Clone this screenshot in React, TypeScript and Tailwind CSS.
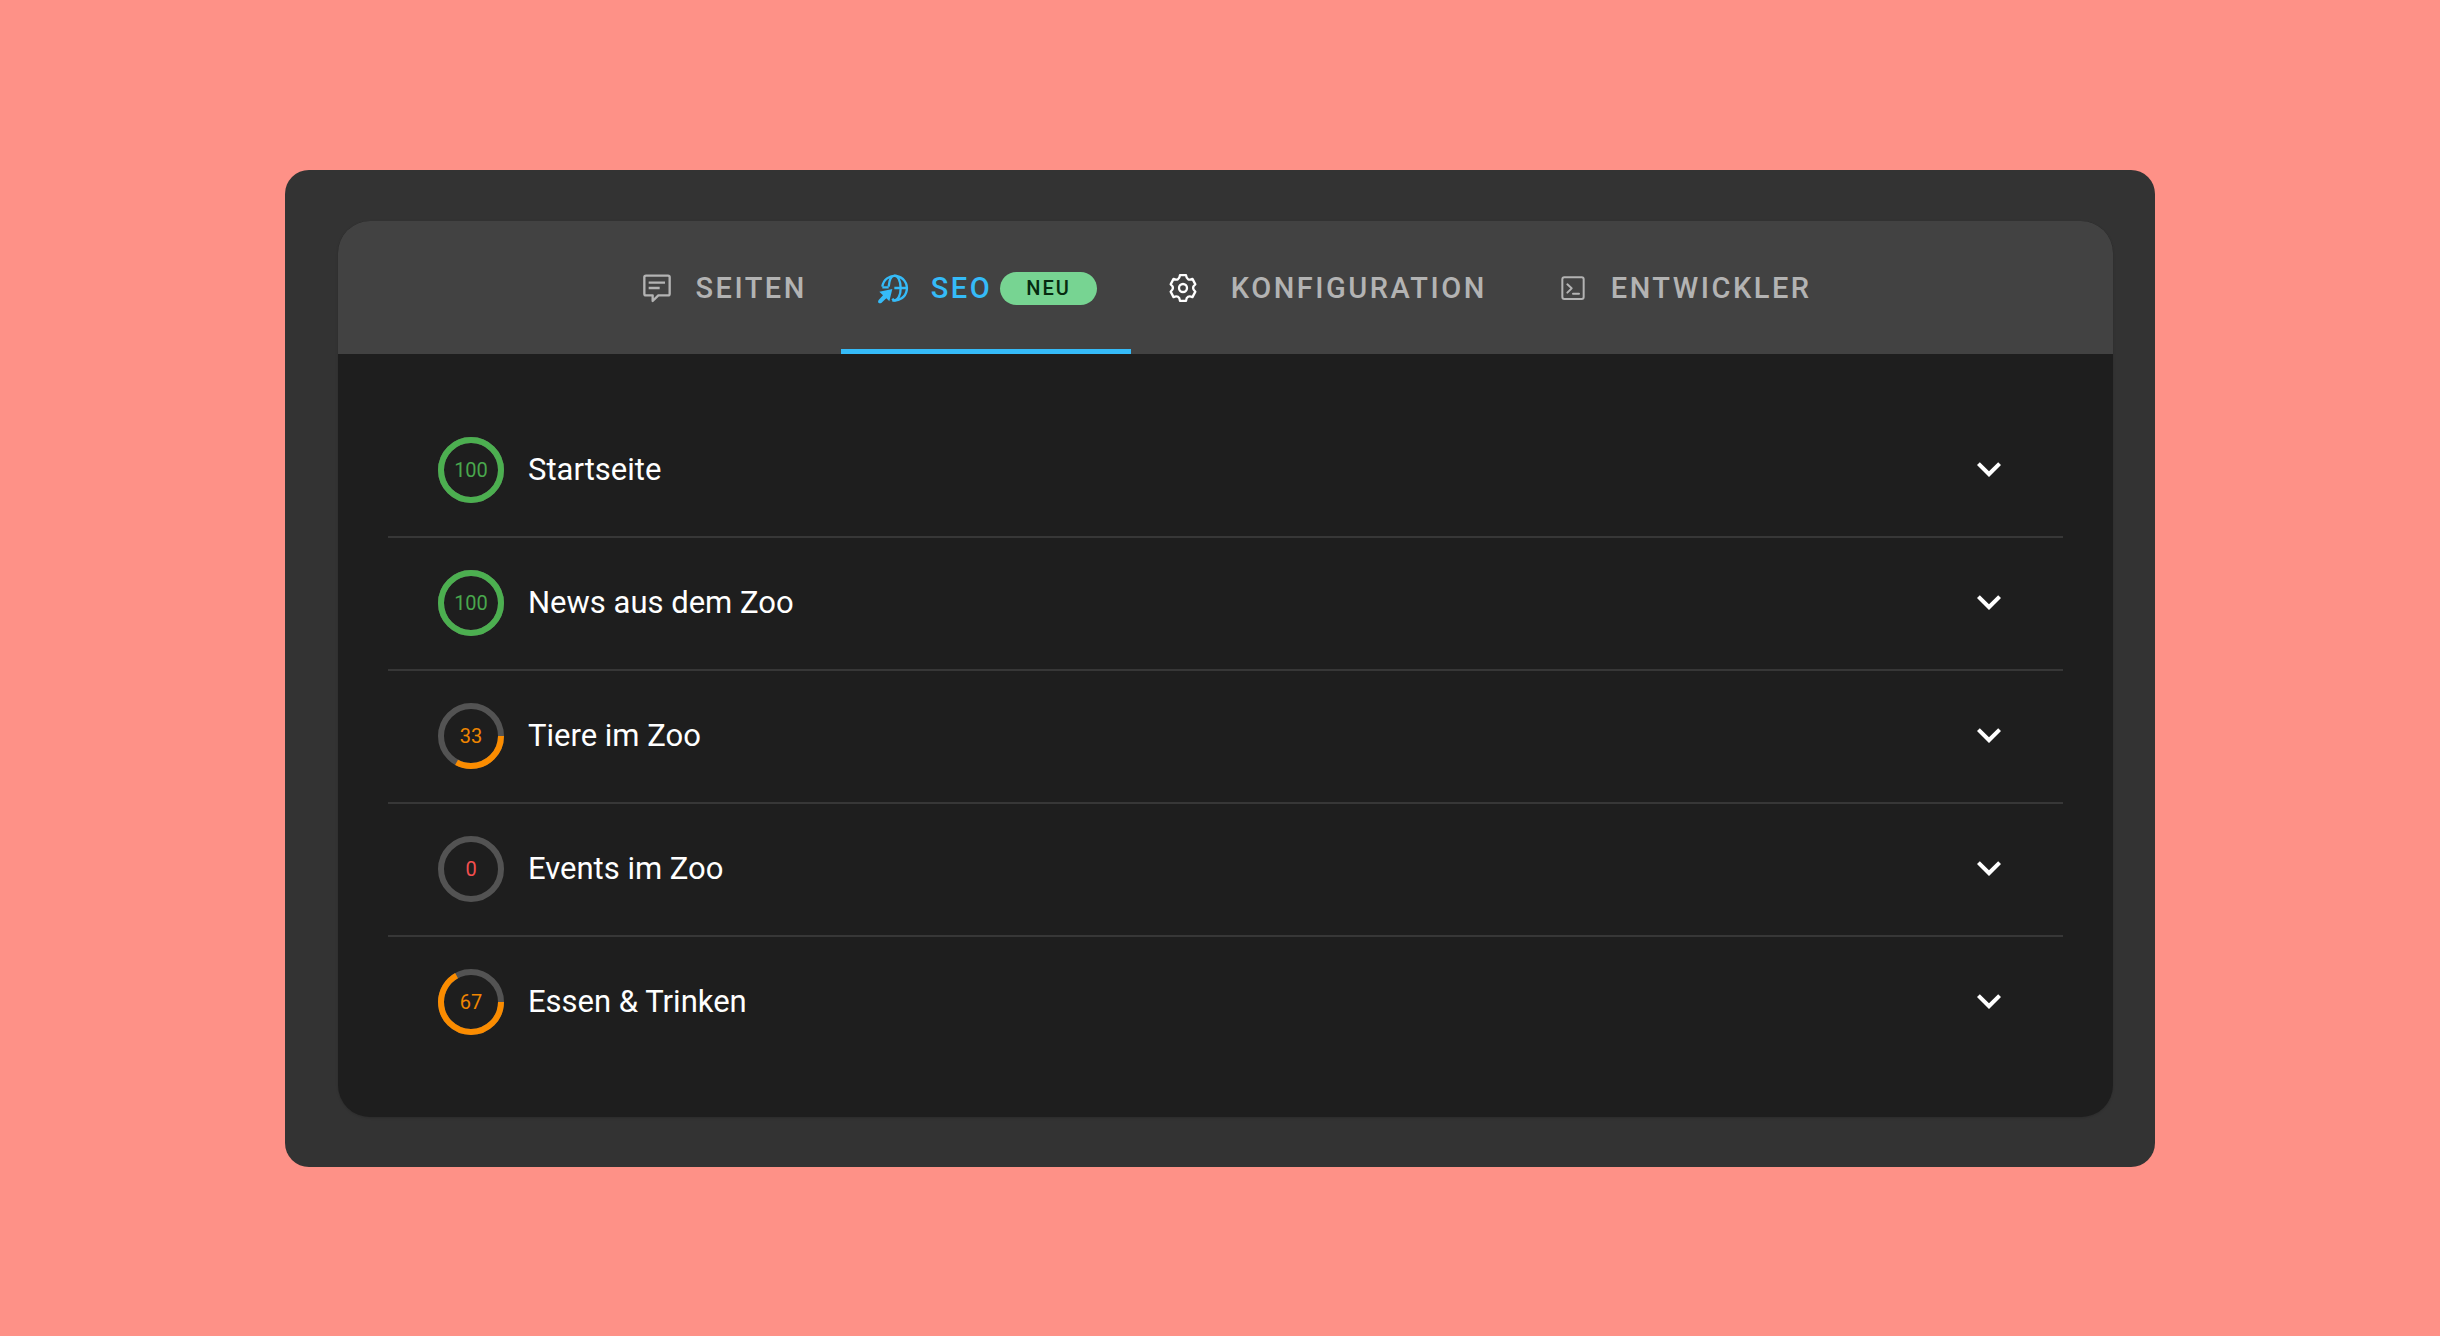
import { useState } from 'react'
import type { ReactNode } from 'react'

interface Page {
  title: string
  score: number
}

interface Tab {
  id: string
  label: string
  icon: ReactNode
  badge?: string
}

const pages: Page[] = [
  { title: 'Startseite', score: 100 },
  { title: 'News aus dem Zoo', score: 100 },
  { title: 'Tiere im Zoo', score: 33 },
  { title: 'Events im Zoo', score: 0 },
  { title: 'Essen & Trinken', score: 67 },
]

function PagesIcon() {
  return (
    <svg viewBox="63 89 108 108" className="size-9 shrink-0" fill="none" stroke="currentColor" strokeWidth="7" strokeLinejoin="round" aria-hidden="true">
      <path d="M84 106H150Q155 106 155 111V160Q155 165 150 165H121L104 182V165H84Q79 165 79 160V111Q79 106 84 106Z" />
      <path d="M92 127H141M92 143H125" />
    </svg>
  )
}

function SeoIcon() {
  return (
    <svg viewBox="769 89 108 108" className="size-9 shrink-0" fill="none" stroke="currentColor" strokeWidth="7" aria-hidden="true">
      <path d="M791 139A37 37 0 1 1 821 180" />
      <path d="M810 139C812 118 819 106 828 106C838 106 846 122 846 143S838 180 828 180C825 180 823 178 821 175" />
      <path d="M791 141H810M827 143H865" />
      <path d="M782 154L821 146L812 183L803 174L788 188Q783 190 779 187Q777 183 780 179L793 165Z" fill="currentColor" stroke="none" />
    </svg>
  )
}

function GearIcon() {
  return (
    <svg viewBox="-54 -54 108 108" className="mr-2.5 size-9 shrink-0 text-white" fill="none" stroke="currentColor" strokeWidth="7" strokeLinejoin="round" aria-hidden="true">
      <path d="M-9 -38.5H9C10.5 -26.2 17.5 -22.3 28.4 -27.4L37 -10.9C28 -4 28 4 37 10.9L28.4 27.4C17.5 22.3 10.5 26.2 9 38.5H-9C-10.5 26.2 -17.5 22.3 -28.4 27.4L-37 10.9C-28 4 -28 -4 -37 -10.9L-28.4 -27.4C-17.5 -22.3 -10.5 -26.2 -9 -38.5Z" />
      <circle r="12" />
    </svg>
  )
}

function DeveloperIcon() {
  return (
    <svg viewBox="20 28 108 108" className="size-9 shrink-0" fill="none" stroke="currentColor" strokeWidth="6" strokeLinecap="round" strokeLinejoin="round" aria-hidden="true">
      <rect x="42" y="50" width="64" height="65" rx="6" />
      <path d="M57 71L70 83L57 96M74 99H92" />
    </svg>
  )
}

const tabs: Tab[] = [
  { id: 'pages', label: 'SEITEN', icon: <PagesIcon /> },
  { id: 'seo', label: 'SEO', icon: <SeoIcon />, badge: 'NEU' },
  { id: 'config', label: 'KONFIGURATION', icon: <GearIcon /> },
  { id: 'dev', label: 'ENTWICKLER', icon: <DeveloperIcon /> },
]

const scoreColor = (score: number) => {
  if (score === 100) return 'text-[#4caf50]'
  if (score > 0) return 'text-[#fb8c00]'
  return 'text-[#ff5252]'
}

function ScoreRing({ score }: { score: number }) {
  return (
    <span className={`grid size-[66px] shrink-0 place-items-center ${scoreColor(score)}`}>
      <svg viewBox="0 0 66 66" className="col-start-1 row-start-1 size-full" fill="none" strokeWidth="6" aria-hidden="true">
        <circle cx="33" cy="33" r="30" className="stroke-[#535353]" />
        {/* progress starts at 3 o'clock */}
        {score > 0 && (
          <circle cx="33" cy="33" r="30" stroke="currentColor" pathLength="100" strokeDasharray={`${score} 100`} />
        )}
      </svg>
      <span className="col-start-1 row-start-1 text-[20px] leading-6 opacity-95">{score}</span>
    </span>
  )
}

export default function App() {
  const [activeTab, setActiveTab] = useState('seo')
  const [openPage, setOpenPage] = useState<string | null>(null)

  return (
    <main className="flex min-h-screen items-center justify-center bg-[#fe9187] font-['Roboto',sans-serif]">
      <div className="w-full max-w-[1870px] rounded-3xl bg-[#333333] pt-[51px] pr-[42px] pb-[50px] pl-[53px]">
        <div className="overflow-hidden rounded-[32px] bg-[#1e1e1e] shadow-sm">
          <div role="tablist" className="flex h-[133px] justify-center bg-[#424242]">
            {tabs.map(tab => (
              <button
                key={tab.id}
                type="button"
                role="tab"
                aria-selected={activeTab === tab.id}
                onClick={() => setActiveTab(tab.id)}
                className={`flex items-center border-b-[5px] px-[34px] pt-[7px] text-[29px] leading-9 font-medium tracking-[2.5px] ${
                  activeTab === tab.id ? 'border-[#35bbf8] text-[#35bbf8]' : 'border-transparent text-[#b3b3b3]'
                }`}
              >
                {tab.icon}
                <span className="ml-5">{tab.label}</span>
                {tab.badge && (
                  <span className="ml-2 flex h-[33px] items-center rounded-full bg-[#77d492] px-[26px] text-[20px] leading-6 tracking-[2px] text-[#062b10]">
                    {tab.badge}
                  </span>
                )}
              </button>
            ))}
          </div>

          <ul className="px-[50px] pt-[51px] pb-[49px]">
            {pages.map(page => (
              <li key={page.title} className="border-b-2 border-[#373737] last:border-b-0">
                <button
                  type="button"
                  aria-expanded={openPage === page.title}
                  onClick={() => setOpenPage(openPage === page.title ? null : page.title)}
                  className="flex h-[131px] w-full items-center px-[50px] text-left text-white"
                >
                  <ScoreRing score={page.score} />
                  <span className="ml-6 flex-1 text-[31px] leading-10">{page.title}</span>
                  <svg
                    viewBox="0 0 24 24"
                    className={`size-12 shrink-0 ${openPage === page.title ? 'rotate-180' : ''}`}
                    fill="currentColor"
                    aria-hidden="true"
                  >
                    <path d="M7.41 8.08L12 12.67L16.59 8.08L18 9.5L12 15.5L6 9.5Z" />
                  </svg>
                </button>
              </li>
            ))}
          </ul>
        </div>
      </div>
    </main>
  )
}
